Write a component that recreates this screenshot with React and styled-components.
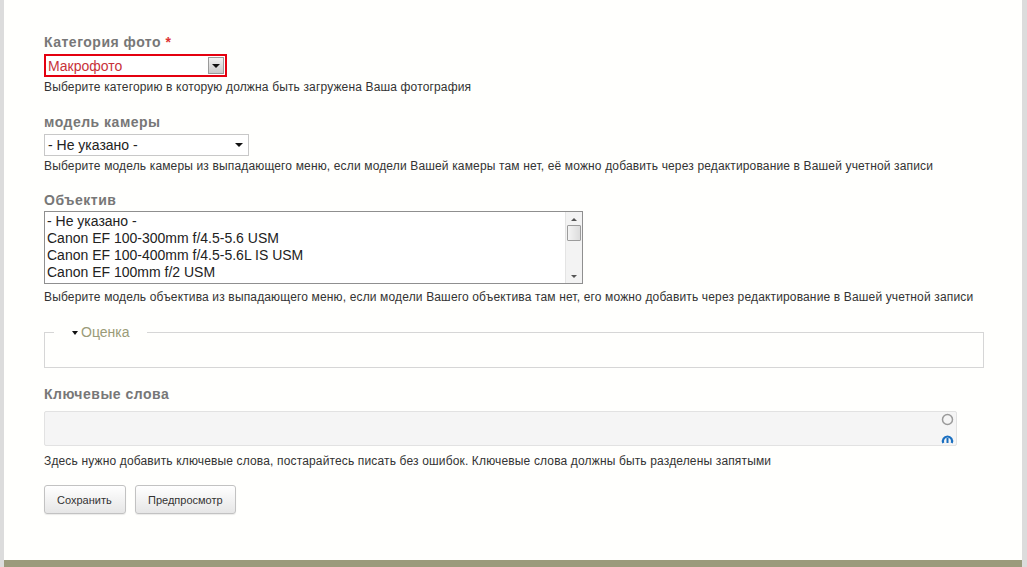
import styled, { createGlobalStyle } from "styled-components";

const GlobalStyle = createGlobalStyle`
  html, body {
    margin: 0;
    padding: 0;
    background: #dcdcdc;
  }
`;

const lenses = [
  "- Не указано -",
  "Canon EF 100-300mm f/4.5-5.6 USM",
  "Canon EF 100-400mm f/4.5-5.6L IS USM",
  "Canon EF 100mm f/2 USM",
];

export default function App() {
  return (
    <>
      <GlobalStyle />
      <Page>
        <Main>
          <Form>
            <Label>
              Категория фото <Required>*</Required>
            </Label>
            <Select width={183} error>
              <SelectText error>Макрофото</SelectText>
              <DropButton>
                <Arrow />
              </DropButton>
            </Select>
            <Description>
              Выберите категорию в которую должна быть загружена Ваша фотография
            </Description>

            <Label>модель камеры</Label>
            <Select width={205}>
              <SelectText>- Не указано -</SelectText>
              <PlainArrow>
                <Arrow />
              </PlainArrow>
            </Select>
            <Description bottom={19}>
              Выберите модель камеры из выпадающего меню, если модели Вашей камеры там нет, её
              можно добавить через редактирование в Вашей учетной записи
            </Description>

            <Label gap={3}>Объектив</Label>
            <ListBox>
              <Options>
                {lenses.map((l) => (
                  <Option key={l}>{l}</Option>
                ))}
              </Options>
              <ScrollBar>
                <ScrollArrow up />
                <Thumb />
                <ScrollArrow />
              </ScrollBar>
            </ListBox>
            <Description top={6} bottom={20}>
              Выберите модель объектива из выпадающего меню, если модели Вашего объектива там нет,
              его можно добавить через редактирование в Вашей учетной записи
            </Description>

            <Fieldset>
              <Legend>
                <LegendArrow />
                Оценка
              </Legend>
            </Fieldset>

            <Label>Ключевые слова</Label>
            <TextArea>
              <Icons>
                <svg width="13" height="13" viewBox="0 0 13 13">
                  <circle cx="6.5" cy="6.5" r="5" fill="none" stroke="#9a9a9a" strokeWidth="1.5" />
                </svg>
                <svg width="13" height="12" viewBox="0 0 13 12">
                  <path
                    d="M2.3 11 A4.6 4.6 0 1 1 10.7 11"
                    fill="none"
                    stroke="#1a6fc0"
                    strokeWidth="2.2"
                  />
                  <rect x="5.5" y="6" width="2" height="5" fill="#1a6fc0" />
                </svg>
              </Icons>
            </TextArea>
            <Description top={8} bottom={17}>
              Здесь нужно добавить ключевые слова, постарайтесь писать без ошибок. Ключевые слова
              должны быть разделены запятыми
            </Description>

            <Buttons>
              <Button width={82}>Сохранить</Button>
              <Button width={101}>Предпросмотр</Button>
            </Buttons>
          </Form>
        </Main>
        <Footer />
      </Page>
    </>
  );
}

const Page = styled.div`
  width: 1027px;
  height: 567px;
  display: flex;
  flex-direction: column;
  background: #dcdcdc;
  overflow: hidden;
`;

const Main = styled.div`
  flex: 1;
  margin: 0 5px 0 4px;
  background: #fffffd;
`;

const Footer = styled.div`
  height: 7px;
  margin: 0 5px 0 4px;
  background: #9b9b7c;
`;

const Form = styled.div`
  display: flex;
  flex-direction: column;
  align-items: flex-start;
  padding: 34px 39px 0 40px;
  font-family: "Liberation Sans", Arial, sans-serif;
`;

const Label = styled.div`
  font-size: 14px;
  line-height: 16px;
  font-weight: bold;
  letter-spacing: 0.5px;
  color: #777;
  margin-bottom: ${(p) => p.gap ?? 4}px;
`;

const Required = styled.span`
  color: #d33;
`;

const Select = styled.div`
  position: relative;
  box-sizing: border-box;
  width: ${(p) => p.width}px;
  height: ${(p) => (p.error ? 23 : 22)}px;
  border: ${(p) => (p.error ? "2px solid #e4000f" : "1px solid #c8c8c8")};
  background: #fff;
  display: flex;
  align-items: center;
  justify-content: space-between;
  padding-left: ${(p) => (p.error ? 2 : 3)}px;
`;

const SelectText = styled.span`
  font-size: 14px;
  color: ${(p) => (p.error ? "#c8323a" : "#222")};
`;

const DropButton = styled.div`
  width: 16px;
  height: 17px;
  margin-right: 1px;
  box-sizing: border-box;
  border: 1px solid #9a9a9a;
  background: linear-gradient(#f2f2f2, #c9c9c9);
  display: flex;
  align-items: center;
  justify-content: center;
`;

const PlainArrow = styled.div`
  width: 16px;
  display: flex;
  justify-content: center;
  margin-right: 1px;
`;

const Arrow = styled.div`
  width: 0;
  height: 0;
  border-left: 4px solid transparent;
  border-right: 4px solid transparent;
  border-top: 4px solid #111;
`;

const Description = styled.div`
  font-size: 12px;
  line-height: 14px;
  letter-spacing: 0.15px;
  color: #333;
  margin-top: ${(p) => p.top ?? 3}px;
  margin-bottom: ${(p) => p.bottom ?? 20}px;
`;

const ListBox = styled.div`
  box-sizing: border-box;
  width: 539px;
  height: 73px;
  border: 1px solid #8f8f8f;
  background: #fff;
  display: flex;
`;

const Options = styled.div`
  flex: 1;
  padding: 1px 0 0 2px;
  overflow: hidden;
`;

const Option = styled.div`
  font-size: 14px;
  line-height: 17px;
  color: #222;
`;

const ScrollBar = styled.div`
  width: 17px;
  background: #f3f3f3;
  border-left: 1px solid #e4e4e4;
  display: flex;
  flex-direction: column;
  align-items: center;
  justify-content: space-between;
  padding: 6px 0 5px;
  box-sizing: border-box;
`;

const ScrollArrow = styled.div`
  width: 0;
  height: 0;
  border-left: 3px solid transparent;
  border-right: 3px solid transparent;
  ${(p) => (p.up ? "border-bottom: 3px solid #555;" : "border-top: 3px solid #555;")}
`;

const Thumb = styled.div`
  width: 14px;
  height: 16px;
  box-sizing: border-box;
  border: 1px solid #9c9c9c;
  border-radius: 1px;
  background: linear-gradient(90deg, #f4f4f4, #dcdcdc);
  margin-bottom: auto;
  margin-top: 4px;
`;

const Fieldset = styled.fieldset`
  box-sizing: border-box;
  width: 940px;
  height: 44px;
  margin: 0 0 18px;
  padding: 0;
  border: 1px solid #d6d6d6;
`;

const Legend = styled.legend`
  margin-left: 9px;
  padding: 0 17px 0 18px;
  font-size: 14px;
  line-height: 16px;
  color: #9a9b78;
  display: flex;
  align-items: center;
`;

const LegendArrow = styled.span`
  width: 0;
  height: 0;
  border-left: 3.5px solid transparent;
  border-right: 3.5px solid transparent;
  border-top: 4px solid #111;
  margin-right: 3px;
  margin-top: 1px;
`;

const TextArea = styled.div`
  position: relative;
  box-sizing: border-box;
  width: 913px;
  height: 35px;
  margin-top: 5px;
  border: 1px solid #e2e2e2;
  border-radius: 2px;
  background: #f5f5f5;
`;

const Icons = styled.div`
  position: absolute;
  right: 2px;
  top: 1px;
  display: flex;
  flex-direction: column;
  gap: 6px;
`;

const Buttons = styled.div`
  display: flex;
  gap: 9px;
`;

const Button = styled.div`
  box-sizing: border-box;
  width: ${(p) => p.width}px;
  height: 29px;
  padding: 0 12px;
  display: flex;
  align-items: center;
  font-size: 11px;
  color: #333;
  border: 1px solid #c2c2c2;
  border-radius: 3px;
  background: linear-gradient(#ffffff, #e6e6e6);
  box-shadow: 0 1px 1px rgba(0, 0, 0, 0.08);
`;
